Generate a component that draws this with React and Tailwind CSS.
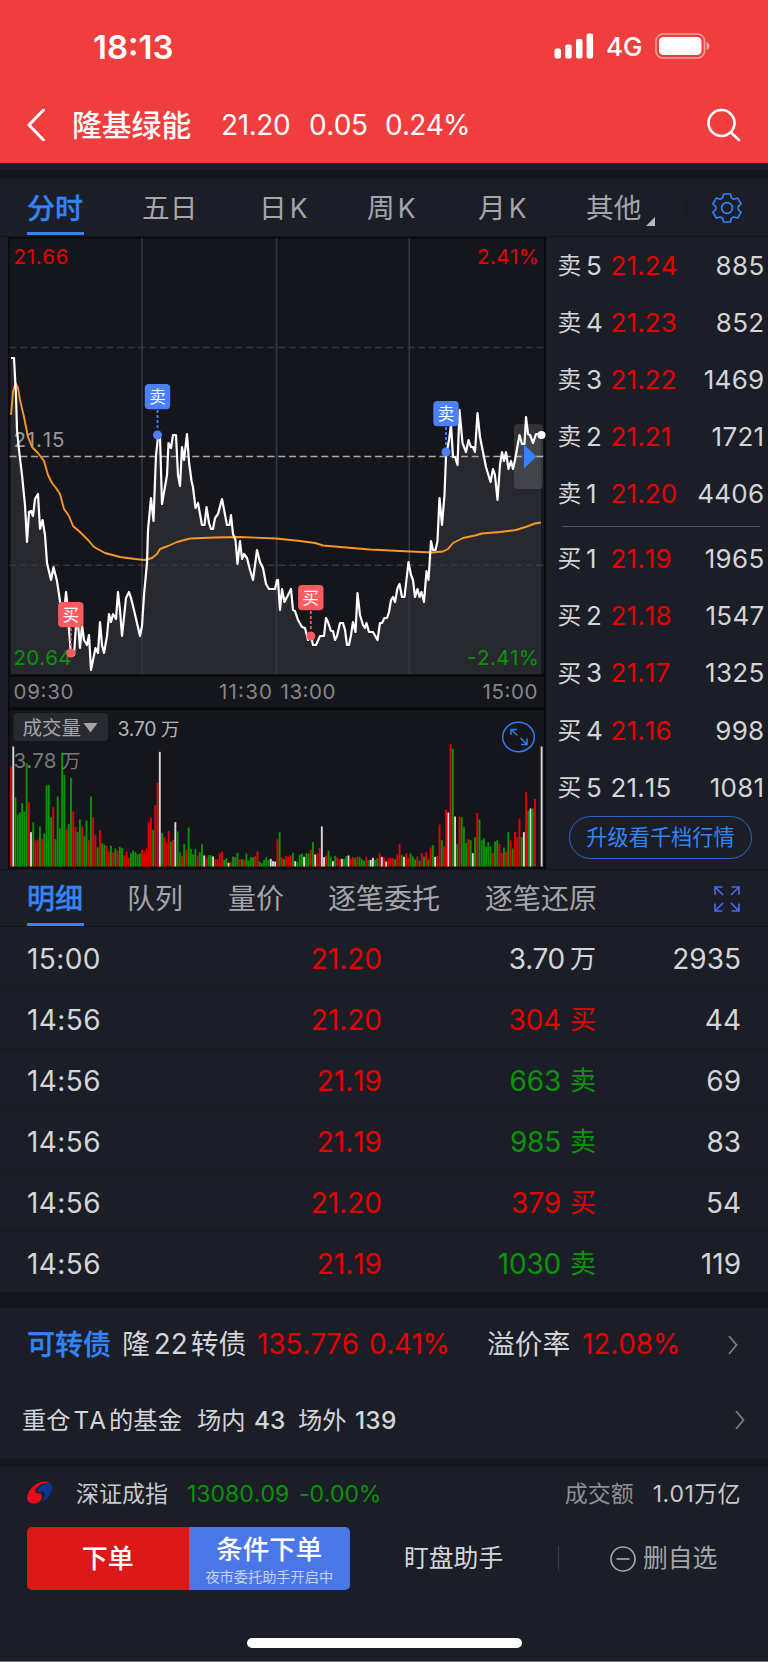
const PRICE_LINE =
  '11,358 14,358 16,395 17,430 19,450 22,475 25,505 27,542 29,512 31,511 33,516 35,499 38,494 40,529 42.5,520 45,535 47,563 51,580 53.5,567 57,581 61,608 63,625 66,592 68,610 69,630 71,655 74,655 77,610 80,648 82,625 84,640 87,645 89,635 91,670 95.5,648 98,653 100,622 102,645 104,653 107,636 109,614 111,622 113,614 116,619 118,592 120,610 122,636 126,598 129,592 131,598 134,610 140,636 142,626 144,595 147,563 148,530 151,498 153.5,521 156,455 158,437 160,437 162,504 167,475 168.5,443 171,448 173,435 176,435 178,475 180,486 182,447 184,460 187,434 189,462 191.5,481 193,487 195.5,508 198,503 202,525 204.5,525 206.5,507 209,523 211,529 213,529 215,518 218,514 222,499 227,525 229.5,525 231,515 233,534 235.5,540 237.5,564 240,541 242,559 244,554 247,558 250,570 253,580 257,550 260,562 263,568 266,584 269,589 275,589 277,580 278,580 280,610 282,589 284.5,602 287,597 291,589 293,610 295,611 298,620 302,627 305,628 308,640 311,636 313,645 316,645 320,636 324,636 326,618 328,622 331,631 333,631 335,640 337,636 340,623 343,623 345,630 347,645 349,645 351,635 353,622 355.5,632 357.5,593 360,615 363,625 365,628 366.5,623 369,632 373,632 377.5,640 380,623 382,623 384.5,618 387,618 389,612 391,600 393,597 395,602 397.5,588 399.5,584 402,597 404.5,597 407,575 408.5,562 411,575 413,580 415,597 417.5,589 419.5,597 421.5,592 424,602 426.5,571 428.5,580 431,541 433,550 435.5,550 437.5,541 439.5,498 442,525 444.5,495 446,456 449,440 451,425 453,457 455,457 457.5,465 459.5,410 462.5,443 466,452 468.5,440 471,447 473,447 475,452 477.5,413 480,437 483,452 486,467 490.5,482 493,469 495,475 497.5,500 500,465 502,452 504,461 506,452 508.5,469 511,461 513,469 515,460 519.5,435 522,444 524.5,444 526,417 528,434 530,435 533,443 536,434 541,435'

const AVERAGE_LINE =
  '11,415 13,392 15.5,383 18,388 20,400 24,417 28,437 32,447 38,453 44,461 48,475 52,483 56,488 60,494 64,509 69,516 73,526 80,532 88,540 94,547 105,553 120,557 135,559 145,560 152,558 157,554 160,549 168,546 177,542 190,538.5 215,537.5 240,537 276,538.5 300,541 315,543 323,545.5 340,547 370,549.5 400,551 432,552.5 443,551.5 448,549 453,543 463,538 475,535.5 482,533.5 500,532 516,530 527,526.5 535,523.5 541,522.5'

// One bar per minute: colour key + bar height in thirds of a pixel below 500
const VOLUME =
  'r200 w140 g292 g346 g338 g310 g335 g190 r307 w397 g368 r422 r419 g380 r417 g401 g257 g255 g352 r322 g418 g290 g385 g158 g225 r387 g372 g234 r335 r382 g396 g359 r380 g408 g362 r421 g290 r352 r405 g443 r391 g430 g434 r438 r455 g438 r457 g446 r453 g441 g445 r466 r455 r474 g460 g452 g457 g463 g461 r450 r455 r446 r368 r355 g390 r316 r249 w156 g399 r412 r428 r393 g426 r420 w367 g395 g457 r468 g432 r450 g383 g448 g463 g447 r467 g457 g433 w467 r475 g466 g466 w470 r478 r478 r461 r455 g480 g475 w489 r486 g470 g471 g459 r478 g478 r479 g461 g482 g472 g472 r468 r455 g485 g490 g480 g472 g480 w477 w484 w485 r418 g397 r473 g478 r468 r471 r467 g459 w484 g487 g465 g461 w471 g461 g461 r449 g427 w464 r461 r444 w380 w472 r467 g452 g471 w484 g468 r473 r478 w477 g477 g469 w467 r477 r472 g475 r471 g471 g478 g483 r470 g482 w480 w474 g480 g475 r461 w471 r473 w485 r475 r475 r475 g478 r463 r433 g466 w471 r461 r474 g461 g470 g479 r470 g483 r460 g471 r457 g479 r443 g436 w471 r469 r374 g421 r440 r329 w338 r133 g147 w350 g432 r350 g352 g382 g430 r418 g421 w460 g412 r339 g359 g421 g416 g440 g427 g440 r459 g425 g421 r433 r459 g443 r455 g397 r421 g446 r396 r411 r357 g412 w397 r277 g333 w326 g326 r297 n500 n500 w140'

const BAR_COLOR = { r: '#e60000', g: '#089408', w: '#d8d8da', n: 'none' }

const bars = VOLUME.split(' ').map((v, i) => ({
  x: 10.1 + i * 2.22,
  h: (500 - Number(v.slice(1))) / 3,
  color: BAR_COLOR[v[0]],
}))

const MARKERS = [
  { label: '卖', x: 157.5, top: 384, dot: 435, color: '#4c7ffb' },
  { label: '卖', x: 446, top: 401, dot: 452, color: '#4c7ffb' },
  { label: '买', x: 70.8, top: 602, dot: 653, color: '#fb5a60' },
  { label: '买', x: 310.8, top: 585, dot: 636, color: '#fb5a60' },
]

const SELLS = [
  ['卖', '5', '21.24', '885'],
  ['卖', '4', '21.23', '852'],
  ['卖', '3', '21.22', '1469'],
  ['卖', '2', '21.21', '1721'],
  ['卖', '1', '21.20', '4406'],
]

const BUYS = [
  ['买', '1', '21.19', '1965'],
  ['买', '2', '21.18', '1547'],
  ['买', '3', '21.17', '1325'],
  ['买', '4', '21.16', '998'],
  ['买', '5', '21.15', '1081'],
]

const TRADES = [
  { time: '15:00', price: '21.20', vol: '3.70', side: '万', count: '2935', tone: 'text-[#d4d5d8]' },
  { time: '14:56', price: '21.20', vol: '304', side: '买', count: '44', tone: 'text-[#e60000]' },
  { time: '14:56', price: '21.19', vol: '663', side: '卖', count: '69', tone: 'text-[#089408]' },
  { time: '14:56', price: '21.19', vol: '985', side: '卖', count: '83', tone: 'text-[#089408]' },
  { time: '14:56', price: '21.20', vol: '379', side: '买', count: '54', tone: 'text-[#e60000]' },
  { time: '14:56', price: '21.19', vol: '1030', side: '卖', count: '119', tone: 'text-[#089408]' },
]

function Header() {
  return (
    <header className="h-[163px] bg-[#f03e3e] text-white">
      <div className="flex h-[92px] items-center pl-[93px] pr-[57px]">
        <span className="mt-[2px] flex-1 text-[33px] font-semibold leading-none">18:13</span>
        <svg width="40" height="26" viewBox="0 0 40 26" fill="white">
          <rect x="0.5" y="15.5" width="6.5" height="10" rx="2" />
          <rect x="11.2" y="11.5" width="6.5" height="14" rx="2" />
          <rect x="22" y="6" width="6.5" height="19.5" rx="2" />
          <rect x="32.6" y="0.5" width="6.5" height="25" rx="2" />
        </svg>
        <span className="ml-3 mt-[2px] w-[49px] text-[26px] font-medium leading-none">4G</span>
        <svg width="56" height="26" viewBox="0 0 56 26">
          <rect x="1" y="1" width="48.5" height="24" rx="7" fill="none" stroke="white" strokeOpacity="0.5" strokeWidth="1.6" />
          <rect x="4" y="4" width="42.5" height="18" rx="4.5" fill="white" />
          <path d="M51.5 9c2.2 1 3 2.300 3 4s-.8 3-3 4z" fill="white" fillOpacity="0.55" />
        </svg>
      </div>
      <div className="flex h-[66px] items-center pl-[27px] pr-[27px] text-[28px]">
        <svg width="18" height="32" viewBox="0 0 18 32" fill="none" stroke="white" strokeWidth="3" strokeLinecap="round" strokeLinejoin="round">
          <path d="M16.500 1 2 16l14.500 15" />
        </svg>
        <span className="ml-[27px] w-[149px] text-[29.800px] font-medium">隆基绿能</span>
        <span className="w-[88px] tracking-[-0.4px]">21.20</span>
        <span className="w-[76px] tracking-[-0.5px]">0.05</span>
        <span className="flex-1 tracking-[-0.7px]">0.24%</span>
        <svg width="34" height="34" viewBox="0 0 34 34" fill="none" stroke="white" strokeWidth="2.600" strokeLinecap="round">
          <circle cx="14.500" cy="15" r="13" />
          <path d="m24 24.500 8 7.500" />
        </svg>
      </div>
    </header>
  )
}

function ChartTabs() {
  return (
    <nav className="flex h-[58px] items-center border-b border-[#14151b] pl-[27px] text-[27.700px] text-[#a4a5a9]">
      <span className="relative mr-[58px] flex h-full w-[57px] items-center pt-[2px] text-[28px] font-medium text-[#3384f8] [-webkit-text-stroke:0.3px]">
        分时
        <i className="absolute bottom-px left-0 h-[3px] w-[57px] bg-[#3384f8]" />
      </span>
      <span className="w-[117px] pt-[2px]">五日</span>
      <span className="w-[108px] pt-[2px]">日<span className="ml-[3px] text-[26.500px]">K</span></span>
      <span className="w-[111px] pt-[2px]">周<span className="ml-[3px] text-[26.500px]">K</span></span>
      <span className="w-[108px] pt-[2px]">月<span className="ml-[3px] text-[26.500px]">K</span></span>
      <span className="w-[60px] pt-[2px]">其他</span>
      <svg className="mt-7" width="9" height="9" viewBox="0 0 9 9"><path d="M9 0v9H0z" fill="#b9babd" /></svg>
      <span className="ml-[31px] h-[26px] w-px bg-[#171920]" />
      <svg className="ml-[25px]" width="30" height="30" viewBox="0 0 30 30" fill="none" stroke="#3384f8" strokeWidth="1.600" strokeLinejoin="round">
        <path d="M11.600 1h6.800l1 3.900 2.400 1.400 3.900-1.200 3.400 5.900-2.900 2.700v2.800l2.900 2.700-3.400 5.800-3.900-1.100-2.400 1.400-1 3.700h-6.800l-1-3.700-2.400-1.400-3.900 1.100L.9 19.200l2.900-2.700v-2.800L.9 11l3.400-5.900 3.900 1.200 2.400-1.400z" />
        <circle cx="15" cy="15" r="5.400" />
      </svg>
    </nav>
  )
}

function PriceChart() {
  return (
    <svg className="block" width="538" height="632" viewBox="8 237 538 632">
      <rect x="8" y="237" width="538" height="632" fill="#08090c" />
      <rect x="9.500" y="238.500" width="534.500" height="436" fill="#15161b" />
      <rect x="9.500" y="677" width="534.500" height="30.500" fill="#15161b" />
      <rect x="9.500" y="710" width="534.500" height="157" fill="#15161b" />

      <polygon points={`${PRICE_LINE} 541,674 11,674`} fill="#28292f" />
      <g stroke="#363746" strokeWidth="1.600">
        <path d="M142 238v436M276.500 238v436M409.300 238v436" />
        <path d="M9.500 347.500H544M9.500 565.200H544" strokeDasharray="7 3.750" strokeWidth="1.400" />
      </g>
      <path d="M9.500 456.500H544" stroke="#a9a9ac" strokeWidth="1.500" strokeDasharray="7 3.750" />
      <g fontSize="20.500">
        <text x="13.500" y="264" fill="#e60000" textLength="55">21.66</text>
        <text x="539" y="263.500" fill="#e60000" textAnchor="end" textLength="62">2.41%</text>
        <text x="13.500" y="447" fill="#98999d" textLength="51">21.15</text>
        <text x="13.500" y="664.500" fill="#089408" textLength="58">20.64</text>
        <text x="539" y="664.500" fill="#089408" textAnchor="end" textLength="72">-2.41%</text>
      </g>
      <polyline points={AVERAGE_LINE} fill="none" stroke="#f6982a" strokeWidth="1.900" strokeLinejoin="round" />
      <polyline points={PRICE_LINE} fill="none" stroke="#fff" strokeWidth="2.200" strokeLinejoin="round" />

      {/* Collapse handle on the right edge */}
      <rect x="514" y="424" width="29" height="65" rx="4" fill="#fff" fillOpacity="0.13" />
      <path d="m524 444.500 12.500 12-12.500 12z" fill="#3384f8" />
      <circle cx="541.500" cy="435" r="4" fill="#fff" />

      {MARKERS.map(m => (
        <g key={m.x}>
          <rect x={m.x - 12.7} y={m.top} width="25.400" height="25.200" rx="4" fill={m.color} />
          <text x={m.x} y={m.top + 18.6} fontSize="16.500" fill="#fff" textAnchor="middle">{m.label}</text>
          <path d={`M${m.x} ${m.top + 26}V${m.dot - 6}`} stroke={m.color} strokeWidth="1.800" strokeDasharray="3 2" />
          <circle cx={m.x} cy={m.dot} r="4.500" fill={m.color} />
        </g>
      ))}

      <g fontSize="20.500" fill="#85868a">
        <text x="13.500" y="699" textLength="60">09:30</text>
        <text x="219" y="699" textLength="53">11:30</text>
        <text x="280.500" y="699" textLength="55">13:00</text>
        <text x="482.500" y="699" textLength="55">15:00</text>
      </g>

      {bars.map((b, i) => (
        <rect key={i} x={b.x} y={866.500 - b.h} width="1.900" height={b.h} fill={b.color} />
      ))}
      <rect x="13.500" y="713" width="94.500" height="28" rx="4" fill="#282a30" />
      <text x="22.500" y="734.500" fontSize="19.500" fill="#a4a5a9">成交量</text>
      <path d="M83.500 723h14l-7 9.500z" fill="#a4a5a9" />
      <g fontSize="19.500">
        <text x="117.500" y="735.500" fill="#b4b5b8" textLength="39">3.70</text>
        <text x="161" y="735.500" fontSize="18.500" fill="#b4b5b8">万</text>
        <text x="13.500" y="767.500" fontSize="20.500" fill="#77787c" textLength="43">3.78</text>
        <text x="61.500" y="767.500" fontSize="19" fill="#77787c">万</text>
      </g>
      <g fill="none" stroke="#2f7df0" strokeWidth="1.500">
        <ellipse cx="518.500" cy="737" rx="15.800" ry="14.700" />
        <path d="M511 735v-5.500h6M511 729.500l6.500 6M527 738.500v6h-6M527 744.500l-6.500-6.500" />
      </g>
    </svg>
  )
}

function BookRow({ row }) {
  const [side, level, price, qty] = row
  return (
    <div className="flex h-[57.200px] items-center text-[26px] leading-none text-[#d4d5d8]">
      <span className="w-[28.500px] text-[23.800px]">{side}</span>
      <span className="w-[24.500px]">{level}</span>
      <span className={`tracking-[0.1px] ${price === '21.15' ? '' : 'text-[#e60000]'}`}>{price}</span>
      <span className="flex-1 text-right tracking-[0.3px]">{qty}</span>
    </div>
  )
}

function OrderBook() {
  return (
    <aside className="flex-1 pl-[11.500px] pr-[3.500px]">
      <div>{SELLS.map(r => <BookRow key={r[2]} row={r} />)}</div>
      <div className="mb-[3.500px] ml-1 mr-[5px] mt-[3px] h-px bg-[#545560]" />
      <div>{BUYS.map(r => <BookRow key={r[2]} row={r} />)}</div>
      <button className="ml-[11.500px] flex h-[43px] w-[183px] items-center justify-center rounded-full border border-[#2a67c0] text-[21.200px] text-[#3384f8]">
        升级看千档行情
      </button>
    </aside>
  )
}

function DetailTabs() {
  return (
    <nav className="flex h-[58px] items-center border-y border-[#14151b] pl-[27px] text-[28px] text-[#a4a5a9]">
      <span className="relative mr-[43px] flex h-full w-[57px] items-center pt-[2px] font-medium text-[#3384f8] [-webkit-text-stroke:0.3px]">
        明细
        <i className="absolute bottom-0 left-0 h-[3px] w-[57px] bg-[#3384f8]" />
      </span>
      <span className="w-[101px] pt-[2px]">队列</span>
      <span className="w-[100px] pt-[2px]">量价</span>
      <span className="w-[157px] pt-[2px]">逐笔委托</span>
      <span className="w-[229px] pt-[2px]">逐笔还原</span>
      <svg className="mt-px" width="26" height="26" viewBox="0 0 26 26" fill="none" stroke="#4c68e8" strokeWidth="1.700">
        <path d="M1 8.500V1h7.500M1 1l8 8M17.500 1H25v7.500M25 1l-8 8M1 17.500V25h7.500M1 25l8-8M25 17.500V25h-7.500M25 25l-8-8" />
      </svg>
    </nav>
  )
}

function TradeRow({ trade }) {
  return (
    <div className="flex h-[61px] items-center border-b border-[#181a21] pl-[27px] pr-[27px] pt-1 text-[28px] leading-none text-[#d4d5d8]">
      <span className="w-[154px] tracking-[0.4px]">{trade.time}</span>
      <span className="w-[201px] text-right text-[#e60000]">{trade.price}</span>
      <span className={`flex w-[214px] items-center justify-end ${trade.tone}`}>
        <span className={trade.side === '万' ? 'mr-[5.500px] tracking-[-0.8px]' : 'mr-[9px] tracking-[-0.2px]'}>{trade.vol}</span>
        <span className="text-[26px]">{trade.side}</span>
      </span>
      <span className="flex-1 text-right">{trade.count}</span>
    </div>
  )
}

function Chevron() {
  return (
    <svg width="10" height="20" viewBox="0 0 10 20" fill="none" stroke="#7b7c82" strokeWidth="1.800">
      <path d="m1 1 7.500 9L1 19" />
    </svg>
  )
}

function Links() {
  return (
    <section className="h-[151px] text-[#d4d5d8]">
      <div className="flex h-[73px] items-center pl-[27px] pr-[30px] text-[27.800px]">
        <span className="w-[95px] text-[28px] font-medium text-[#3384f8] [-webkit-text-stroke:0.3px]">可转债</span>
        <span className="w-[135px]">隆<span className="ml-1 mr-[3px]">22</span>转债</span>
        <span className="w-[112px] text-[#e60000]">135.776</span>
        <span className="w-[118px] tracking-[-0.3px] text-[#e60000]">0.41%</span>
        <span className="w-[95px]">溢价率</span>
        <span className="flex-1 text-[#e60000]">12.08%</span>
        <Chevron />
      </div>
      <div className="flex h-[78px] items-center pl-[22px] pr-[23px] text-[24.300px]">
        <span className="w-[175px]">重仓<span className="mx-[3px]">TA</span>的基金</span>
        <span className="w-[57px]">场内</span>
        <span className="w-[44px] text-[24.500px] font-medium">43</span>
        <span className="w-[57px]">场外</span>
        <span className="flex-1 text-[24.500px] font-medium tracking-[0.2px]">139</span>
        <Chevron />
      </div>
    </section>
  )
}

function IndexBar() {
  return (
    <div className="flex h-[54px] items-center pl-[27px] pr-[27px] text-[23px] text-[#c8c9cc]">
      <svg className="mb-[3px] mr-[23px]" width="26" height="24" viewBox="0 0 26 24">
        <path d="M24 2C19-1 11 .5 5.500 6 1 10.500-.5 15.500.3 18.500 1.200 21.500 4 23 7.500 22.500c4-.5 7-3 7.300-6.500.2-2.500-1.300-4-3.300-3.600-2 .2-3.500-1-3-3.400C9.500 5 17 1 24 2z" fill="#ea0a1c" />
        <path d="M24 3c2.300 2.500 1.400 7.500-1.500 11.500-2 2.700-5 5-8.500 6.500 3-3 4.500-6.500 3.300-9-1-1.800-3.300-1.600-4.800-.8-1.500.6-2.500-.4-2-1.900C12 5.300 18.500 1.500 24 3z" fill="#0a3494" />
      </svg>
      <span className="w-[111px]">深证成指</span>
      <span className="w-[112px] text-[#089408]">13080.09</span>
      <span className="flex-1 tracking-[-0.2px] text-[#089408]">-0.00%</span>
      <span className="mr-[19px] text-[#8e8f94]">成交额</span>
      <span className="tracking-[0.4px]">1.01万亿</span>
    </div>
  )
}

function ActionBar() {
  return (
    <div className="mt-[6px] flex h-[63px] items-center pl-[27px]">
      <div className="flex h-full w-[323px] overflow-hidden rounded-[5px] text-white">
        <button className="w-1/2 bg-[#dd1818] text-[26px] font-medium">下单</button>
        <button className="flex w-1/2 flex-col items-center justify-center bg-[#4b76e8]">
          <span className="mt-[2px] text-[26.500px] font-medium leading-[32px]">条件下单</span>
          <span className="mt-[3px] text-[14.200px] leading-[18px] text-[#c3d1f8]">夜市委托助手开启中</span>
        </button>
      </div>
      <span className="ml-[54px] w-[154px] text-[24.800px] text-[#d4d5d8]">盯盘助手</span>
      <span className="h-[25px] w-px bg-[#3a3b44]" />
      <svg className="ml-[51px] mr-[7px]" width="26" height="26" viewBox="0 0 26 26" fill="none" stroke="#a4a5a9" strokeWidth="1.700">
        <circle cx="13" cy="13" r="12" />
        <path d="M6.500 13h13" />
      </svg>
      <span className="text-[24.800px] text-[#a4a5a9]">删自选</span>
    </div>
  )
}

export default function App() {
  return (
    <div className="h-[1662px] w-[768px] overflow-hidden border-b border-[#6e7075] bg-[#1b1e26] font-['Inter','Noto_Sans_CJK_SC',sans-serif] [font-kerning:none]">
      <Header />
      <div className="h-[7px]" />
      <div className="h-[9px] bg-[#15161b]" />
      <ChartTabs />
      <main className="flex h-[632px] pl-2">
        <PriceChart />
        <OrderBook />
      </main>
      <DetailTabs />
      <section className="h-[366px]">
        {TRADES.map((t, i) => <TradeRow key={i} trade={t} />)}
      </section>
      <div className="h-[15px] bg-[#15161b]" />
      <Links />
      <div className="h-[8px] bg-[#15161b]" />
      <IndexBar />
      <ActionBar />
      <div className="mx-auto mt-[48px] h-[10px] w-[275px] rounded-full bg-white" />
    </div>
  )
}
